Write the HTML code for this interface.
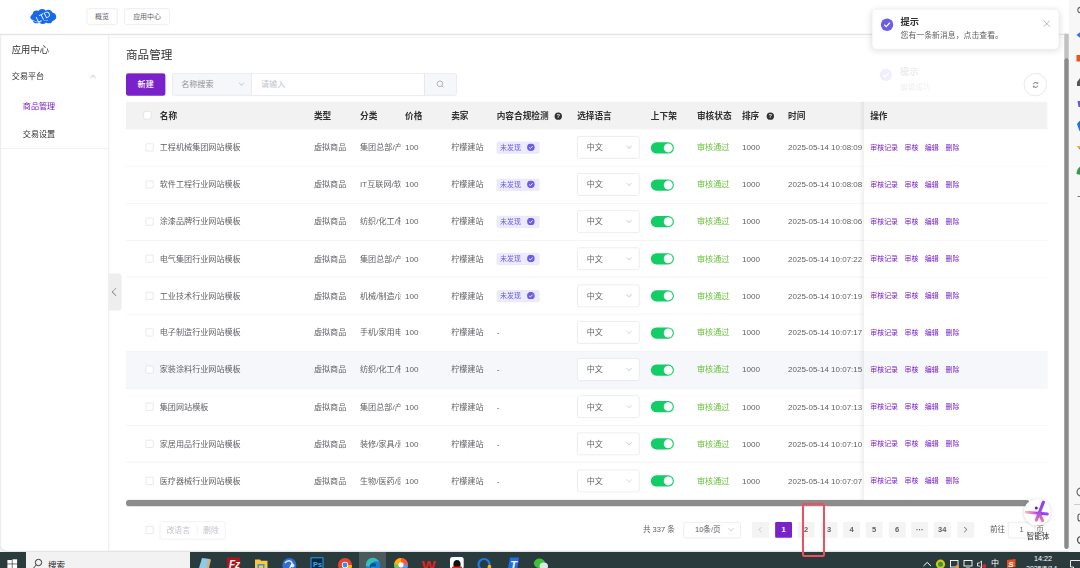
<!DOCTYPE html>
<html lang="zh-CN">
<head>
<meta charset="utf-8">
<title>商品管理</title>
<style>
*{box-sizing:border-box;margin:0;padding:0}
html,body{width:1080px;height:568px;overflow:hidden;background:#f3f3f3;font-family:"Liberation Sans","Noto Sans CJK SC",sans-serif;}
#stage{position:absolute;left:0;top:0;width:1920px;height:1010px;transform:scale(0.5625);transform-origin:0 0;color:#606266;font-size:14.4px;}
#page{position:absolute;left:0;top:0;width:1900.5px;height:979px;background:#fff;border-radius:0 0 0 14px;overflow:hidden;box-shadow:0 0 3px rgba(0,0,0,.25);}
.abs{position:absolute}
/* header */
#hdr{position:absolute;left:0;top:0;width:1902px;height:60px;background:#fff;box-shadow:0 1px 3px rgba(0,0,0,.12);z-index:5}
.tag{position:absolute;top:14.5px;height:29px;border:1px solid #dcdfe6;border-radius:4px;font-size:12.4px;color:#606266;text-align:center;line-height:27px;background:#fff}
/* sidebar */
#side{position:absolute;left:0;top:60px;width:193.5px;height:919px;border-right:1.5px solid #dcdcdc;background:#fff}
#side .t{position:absolute;white-space:nowrap}
/* main */
#ttl{position:absolute;left:224px;top:83px;font-size:20.6px;color:#303133;line-height:28px}
.btn-new{position:absolute;left:224px;top:130px;width:70px;height:40px;background:#7a22c9;border-radius:4px;color:#fff;font-size:14.4px;font-weight:500;text-align:center;line-height:40px}
.sel1{position:absolute;left:306px;top:130px;width:142px;height:40px;border:1px solid #dcdfe6;border-radius:4px 0 0 4px;background:#f5f7fa;color:#909399;line-height:38px;padding-left:15px}
.inp1{position:absolute;left:447px;top:130px;width:308px;height:40px;border:1px solid #dcdfe6;background:#fff;color:#c0c4cc;line-height:38px;padding-left:16px}
.sbtn{position:absolute;left:754px;top:130px;width:58px;height:40px;border:1px solid #dcdfe6;border-radius:0 4px 4px 0;background:#f5f7fa}
/* table */
#thead{position:absolute;left:224px;top:181px;width:1637.5px;height:50px;background:#f2f2f2;color:#303133;font-weight:bold;font-size:15.4px}
#thead span{position:absolute;top:0;line-height:49px;white-space:nowrap}
.row{position:absolute;left:224px;width:1637.5px;height:65.8px;border-bottom:1px solid #e4e7ef;background:#fff}
.row.hov{background:#f5f7fa}
.row span{position:absolute;top:0;line-height:65px;white-space:nowrap}
.cb{position:absolute;width:14px;height:14px;border:1px solid #d4d8e2;border-radius:2px;background:#fff}
.lang{position:absolute;left:802px;top:12px;width:111px;height:40px;border:1px solid #dcdfe6;border-radius:4px;background:#fff}
.lang b{position:absolute;left:16px;top:0;line-height:38px;font-weight:normal;color:#606266}
.sw{position:absolute;left:933px;top:22.5px;width:41px;height:20px;border-radius:10px;background:#13ce66}
.sw i{position:absolute;right:2px;top:2px;width:16px;height:16px;border-radius:8px;background:#fff}
.ok{color:#67c23a}
.op{color:#7a22c9;font-size:12.4px}
.chip{position:absolute;left:659px;top:22px;width:76px;height:21px;border-radius:3px;background:#ecebff;border:1px solid #e1e0fb;color:#6b5ce7;font-size:12.4px;line-height:19px;padding-left:5px}
.chev{position:absolute;width:7px;height:7px;border-right:1.4px solid #c0c4cc;border-bottom:1.4px solid #c0c4cc;transform:rotate(45deg)}
.fixsh{position:absolute;left:1526px;top:181px;width:10px;height:708px;background:linear-gradient(to right,rgba(0,0,0,0),rgba(0,0,0,.06))}
.pg{position:absolute;top:927.5px;width:30px;height:28px;border-radius:2px;background:#f4f4f5;color:#606266;font-size:13.4px;font-weight:bold;text-align:center;line-height:28px}
.pg.on{background:#7a22c9;color:#fff}

.opc{position:absolute;left:1312px;top:0;width:325.5px;height:65px;background:inherit}
.cat{width:72px;overflow:hidden}
.tm{width:134px;overflow:hidden;font-size:14.2px}
.qm{position:absolute;width:13px;height:13px;border-radius:6.5px;background:#303133;color:#f2f2f2;font-size:10.3px;line-height:13px;text-align:center;font-weight:bold}
#notif{position:absolute;left:1549.5px;top:15.5px;width:333px;height:72px;background:#fff;border-radius:8px;box-shadow:0 2px 12px rgba(0,0,0,.12);border:1px solid #ebeef5;z-index:9}
#tb{position:absolute;left:0;top:552px;width:1080px;height:16px;background:#2a3b3d;overflow:hidden;z-index:30}
#rs{position:absolute;left:1069px;top:0;width:11px;height:552px;background:#f7f7f7;overflow:hidden}
</style>
</head>
<body>
<div id="stage">
<div id="page">
  <div id="hdr">
    <svg class="abs" style="left:53px;top:15px" width="48" height="28" viewBox="0 0 48 28">
      <g fill="#1769e8"><ellipse cx="24" cy="15.5" rx="23" ry="9.5"/><circle cx="12" cy="10.5" r="7"/><circle cx="22" cy="8" r="7"/><circle cx="33" cy="10" r="7.5"/><circle cx="40" cy="14" r="6.500"/><circle cx="12" cy="20" r="6.500"/><circle cx="23" cy="21" r="6.500"/><circle cx="34" cy="20" r="6.500"/></g>
      <text x="10" y="19.5" font-size="15" fill="#fff" font-family="Liberation Sans, sans-serif" transform="rotate(-27 24 14)" textLength="27" lengthAdjust="spacingAndGlyphs">LTD</text>
      <text x="24" y="21.500" font-size="4" fill="#fff" font-family="Liberation Sans, sans-serif">.com</text>
      <path d="M5 20c3 4 10 5 16 3.500" fill="none" stroke="#fff" stroke-width="0.900"/>
    </svg>
    <div class="tag" style="left:153.5px;width:55.5px">概览</div>
    <div class="tag" style="left:221px;width:81px">应用中心</div>
  </div>
  <div class="abs" style="left:0;top:60px;width:1.5px;height:919px;background:#ececec;z-index:4"></div>
  <div id="side">
    <div class="t" style="left:21px;top:17px;font-size:16.5px;color:#303133;line-height:22px">应用中心</div>
    <div class="t" style="left:21px;top:65px;font-size:14.4px;color:#303133;line-height:20px">交易平台</div>
    <div class="chev" style="left:162px;top:75px;transform:rotate(-135deg);border-color:#b0b3b9"></div>
    <div class="t" style="left:40.5px;top:119px;font-size:14.4px;color:#7a22c9;line-height:20px">商品管理</div>
    <div class="t" style="left:40.5px;top:169px;font-size:14.4px;color:#303133;line-height:20px">交易设置</div>
    <div class="abs" style="left:0;top:204px;width:192px;height:1px;background:#e6e6e6"></div>
  </div>
  <div class="abs" style="left:193px;top:486px;width:22.500px;height:66px;background:#eeeeee;border-radius:0 6px 6px 0"></div>
  <div class="chev" style="left:201px;top:514px;width:10px;height:10px;border-width:1.800px;transform:rotate(135deg);border-color:#606266"></div>

  <div class="abs" style="left:0;top:59.5px;width:1900px;height:3px;background:linear-gradient(#f2f2f2,#e2e2e2 50%,#f4f4f4);z-index:6"></div>
  <div class="abs" style="left:194px;top:66px;width:1697px;height:1px;background:#f0f0f0"></div>
  <div id="ttl">商品管理</div>
  <div class="btn-new">新建</div>
  <div class="sel1">名称搜索<div class="chev" style="left:119px;top:13px"></div></div>
  <div class="inp1">请输入</div>
  <div class="sbtn"><svg class="abs" style="left:20px;top:11px" width="16" height="16" viewBox="0 0 16 16"><circle cx="7" cy="7" r="5" fill="none" stroke="#909399" stroke-width="1.2"/><path d="M11 11l2.5 2.5" stroke="#909399" stroke-width="1.2"/></svg></div>

  <div id="thead">
    <div class="cb" style="left:31px;top:17px"></div>
    <span style="left:60px">名称</span>
    <span style="left:334px">类型</span>
    <span style="left:416px">分类</span>
    <span style="left:496px">价格</span>
    <span style="left:578px">卖家</span>
    <span style="left:659px">内容合规检测</span>
    <div class="qm" style="left:762px;top:19px">?</div>
    <span style="left:802px">选择语言</span>
    <span style="left:933px">上下架</span>
    <span style="left:1015px">审核状态</span>
    <span style="left:1095px">排序</span>
    <div class="qm" style="left:1139px;top:19px">?</div>
    <span style="left:1177px">时间</span>
    <span style="left:1323px">操作</span>
  </div>
    <div class="row" style="top:230.3px">
    <div class="cb" style="left:35px;top:25px"></div>
    <span style="left:60px">工程机械集团网站模板</span>
    <span style="left:334px">虚拟商品</span>
    <span class="cat" style="left:416px">集团总部/产</span>
    <span style="left:496px">100</span>
    <span style="left:578px">柠檬建站</span>
    <div class="chip">未发现<svg class="abs" style="left:53px;top:2px" width="13.5" height="13.5" viewBox="0 0 12 12"><circle cx="6" cy="6" r="6" fill="#6b5ce7"/><path d="M3.2 6.2l2 1.9 3.6-3.8" fill="none" stroke="#fff" stroke-width="1.4"/></svg></div>
    <div class="lang"><b>中文</b><div class="chev" style="left:88px;top:13px"></div></div>
    <div class="sw"><i></i></div>
    <span class="ok" style="left:1015px">审核通过</span>
    <span style="left:1095px">1000</span>
    <span class="tm" style="left:1177px">2025-05-14 10:08:09</span>
    <div class="opc"><span class="op" style="left:11px">审核记录</span><span class="op" style="left:72px">审核</span><span class="op" style="left:108px">编辑</span><span class="op" style="left:145px">删除</span></div>
  </div>
  <div class="row" style="top:296.1px">
    <div class="cb" style="left:35px;top:25px"></div>
    <span style="left:60px">软件工程行业网站模板</span>
    <span style="left:334px">虚拟商品</span>
    <span class="cat" style="left:416px">IT互联网/软</span>
    <span style="left:496px">100</span>
    <span style="left:578px">柠檬建站</span>
    <div class="chip">未发现<svg class="abs" style="left:53px;top:2px" width="13.5" height="13.5" viewBox="0 0 12 12"><circle cx="6" cy="6" r="6" fill="#6b5ce7"/><path d="M3.2 6.2l2 1.9 3.6-3.8" fill="none" stroke="#fff" stroke-width="1.4"/></svg></div>
    <div class="lang"><b>中文</b><div class="chev" style="left:88px;top:13px"></div></div>
    <div class="sw"><i></i></div>
    <span class="ok" style="left:1015px">审核通过</span>
    <span style="left:1095px">1000</span>
    <span class="tm" style="left:1177px">2025-05-14 10:08:08</span>
    <div class="opc"><span class="op" style="left:11px">审核记录</span><span class="op" style="left:72px">审核</span><span class="op" style="left:108px">编辑</span><span class="op" style="left:145px">删除</span></div>
  </div>
  <div class="row" style="top:361.9px">
    <div class="cb" style="left:35px;top:25px"></div>
    <span style="left:60px">涂漆品牌行业网站模板</span>
    <span style="left:334px">虚拟商品</span>
    <span class="cat" style="left:416px">纺织/化工/制</span>
    <span style="left:496px">100</span>
    <span style="left:578px">柠檬建站</span>
    <div class="chip">未发现<svg class="abs" style="left:53px;top:2px" width="13.5" height="13.5" viewBox="0 0 12 12"><circle cx="6" cy="6" r="6" fill="#6b5ce7"/><path d="M3.2 6.2l2 1.9 3.6-3.8" fill="none" stroke="#fff" stroke-width="1.4"/></svg></div>
    <div class="lang"><b>中文</b><div class="chev" style="left:88px;top:13px"></div></div>
    <div class="sw"><i></i></div>
    <span class="ok" style="left:1015px">审核通过</span>
    <span style="left:1095px">1000</span>
    <span class="tm" style="left:1177px">2025-05-14 10:08:06</span>
    <div class="opc"><span class="op" style="left:11px">审核记录</span><span class="op" style="left:72px">审核</span><span class="op" style="left:108px">编辑</span><span class="op" style="left:145px">删除</span></div>
  </div>
  <div class="row" style="top:427.7px">
    <div class="cb" style="left:35px;top:25px"></div>
    <span style="left:60px">电气集团行业网站模板</span>
    <span style="left:334px">虚拟商品</span>
    <span class="cat" style="left:416px">集团总部/产</span>
    <span style="left:496px">100</span>
    <span style="left:578px">柠檬建站</span>
    <div class="chip">未发现<svg class="abs" style="left:53px;top:2px" width="13.5" height="13.5" viewBox="0 0 12 12"><circle cx="6" cy="6" r="6" fill="#6b5ce7"/><path d="M3.2 6.2l2 1.9 3.6-3.8" fill="none" stroke="#fff" stroke-width="1.4"/></svg></div>
    <div class="lang"><b>中文</b><div class="chev" style="left:88px;top:13px"></div></div>
    <div class="sw"><i></i></div>
    <span class="ok" style="left:1015px">审核通过</span>
    <span style="left:1095px">1000</span>
    <span class="tm" style="left:1177px">2025-05-14 10:07:22</span>
    <div class="opc"><span class="op" style="left:11px">审核记录</span><span class="op" style="left:72px">审核</span><span class="op" style="left:108px">编辑</span><span class="op" style="left:145px">删除</span></div>
  </div>
  <div class="row" style="top:493.5px">
    <div class="cb" style="left:35px;top:25px"></div>
    <span style="left:60px">工业技术行业网站模板</span>
    <span style="left:334px">虚拟商品</span>
    <span class="cat" style="left:416px">机械/制造/设</span>
    <span style="left:496px">100</span>
    <span style="left:578px">柠檬建站</span>
    <div class="chip">未发现<svg class="abs" style="left:53px;top:2px" width="13.5" height="13.5" viewBox="0 0 12 12"><circle cx="6" cy="6" r="6" fill="#6b5ce7"/><path d="M3.2 6.2l2 1.9 3.6-3.8" fill="none" stroke="#fff" stroke-width="1.4"/></svg></div>
    <div class="lang"><b>中文</b><div class="chev" style="left:88px;top:13px"></div></div>
    <div class="sw"><i></i></div>
    <span class="ok" style="left:1015px">审核通过</span>
    <span style="left:1095px">1000</span>
    <span class="tm" style="left:1177px">2025-05-14 10:07:19</span>
    <div class="opc"><span class="op" style="left:11px">审核记录</span><span class="op" style="left:72px">审核</span><span class="op" style="left:108px">编辑</span><span class="op" style="left:145px">删除</span></div>
  </div>
  <div class="row" style="top:559.3px">
    <div class="cb" style="left:35px;top:25px"></div>
    <span style="left:60px">电子制造行业网站模板</span>
    <span style="left:334px">虚拟商品</span>
    <span class="cat" style="left:416px">手机/家用电</span>
    <span style="left:496px">100</span>
    <span style="left:578px">柠檬建站</span>
    <span style="left:659px">-</span>
    <div class="lang"><b>中文</b><div class="chev" style="left:88px;top:13px"></div></div>
    <div class="sw"><i></i></div>
    <span class="ok" style="left:1015px">审核通过</span>
    <span style="left:1095px">1000</span>
    <span class="tm" style="left:1177px">2025-05-14 10:07:17</span>
    <div class="opc"><span class="op" style="left:11px">审核记录</span><span class="op" style="left:72px">审核</span><span class="op" style="left:108px">编辑</span><span class="op" style="left:145px">删除</span></div>
  </div>
  <div class="row hov" style="top:625.0999999999999px">
    <div class="cb" style="left:35px;top:25px"></div>
    <span style="left:60px">家装涂料行业网站模板</span>
    <span style="left:334px">虚拟商品</span>
    <span class="cat" style="left:416px">纺织/化工/制</span>
    <span style="left:496px">100</span>
    <span style="left:578px">柠檬建站</span>
    <span style="left:659px">-</span>
    <div class="lang"><b>中文</b><div class="chev" style="left:88px;top:13px"></div></div>
    <div class="sw"><i></i></div>
    <span class="ok" style="left:1015px">审核通过</span>
    <span style="left:1095px">1000</span>
    <span class="tm" style="left:1177px">2025-05-14 10:07:15</span>
    <div class="opc"><span class="op" style="left:11px">审核记录</span><span class="op" style="left:72px">审核</span><span class="op" style="left:108px">编辑</span><span class="op" style="left:145px">删除</span></div>
  </div>
  <div class="row" style="top:690.9px">
    <div class="cb" style="left:35px;top:25px"></div>
    <span style="left:60px">集团网站模板</span>
    <span style="left:334px">虚拟商品</span>
    <span class="cat" style="left:416px">集团总部/产</span>
    <span style="left:496px">100</span>
    <span style="left:578px">柠檬建站</span>
    <span style="left:659px">-</span>
    <div class="lang"><b>中文</b><div class="chev" style="left:88px;top:13px"></div></div>
    <div class="sw"><i></i></div>
    <span class="ok" style="left:1015px">审核通过</span>
    <span style="left:1095px">1000</span>
    <span class="tm" style="left:1177px">2025-05-14 10:07:13</span>
    <div class="opc"><span class="op" style="left:11px">审核记录</span><span class="op" style="left:72px">审核</span><span class="op" style="left:108px">编辑</span><span class="op" style="left:145px">删除</span></div>
  </div>
  <div class="row" style="top:756.7px">
    <div class="cb" style="left:35px;top:25px"></div>
    <span style="left:60px">家居用品行业网站模板</span>
    <span style="left:334px">虚拟商品</span>
    <span class="cat" style="left:416px">装修/家具/建</span>
    <span style="left:496px">100</span>
    <span style="left:578px">柠檬建站</span>
    <span style="left:659px">-</span>
    <div class="lang"><b>中文</b><div class="chev" style="left:88px;top:13px"></div></div>
    <div class="sw"><i></i></div>
    <span class="ok" style="left:1015px">审核通过</span>
    <span style="left:1095px">1000</span>
    <span class="tm" style="left:1177px">2025-05-14 10:07:10</span>
    <div class="opc"><span class="op" style="left:11px">审核记录</span><span class="op" style="left:72px">审核</span><span class="op" style="left:108px">编辑</span><span class="op" style="left:145px">删除</span></div>
  </div>
  <div class="row" style="top:822.5px">
    <div class="cb" style="left:35px;top:25px"></div>
    <span style="left:60px">医疗器械行业网站模板</span>
    <span style="left:334px">虚拟商品</span>
    <span class="cat" style="left:416px">生物/医药/医</span>
    <span style="left:496px">100</span>
    <span style="left:578px">柠檬建站</span>
    <span style="left:659px">-</span>
    <div class="lang"><b>中文</b><div class="chev" style="left:88px;top:13px"></div></div>
    <div class="sw"><i></i></div>
    <span class="ok" style="left:1015px">审核通过</span>
    <span style="left:1095px">1000</span>
    <span class="tm" style="left:1177px">2025-05-14 10:07:07</span>
    <div class="opc"><span class="op" style="left:11px">审核记录</span><span class="op" style="left:72px">审核</span><span class="op" style="left:108px">编辑</span><span class="op" style="left:145px">删除</span></div>
  </div>
  <div class="fixsh"></div>
  <div class="abs" style="left:224px;top:889px;width:1606px;height:10.5px;border-radius:5px;background:#8c8c8c"></div>
  <!-- footer -->
  <div class="cb" style="left:259px;top:934.5px"></div>
  <div class="abs" style="left:284px;top:926.5px;width:117px;height:32px;border:1px solid #e4e7ed;border-radius:3px;background:#fff;color:#c0c4cc;font-size:14px;line-height:30px;white-space:nowrap"><span class="abs" style="left:11px">改语言</span><span class="abs" style="left:65px;top:7px;width:1px;height:16px;background:#e4e7ed"></span><span class="abs" style="left:76px">删除</span></div>
  <div class="abs" style="left:1143px;top:927px;font-size:13.4px;line-height:30px;color:#606266;white-space:nowrap">共 337 条</div>
  <div class="abs" style="left:1214.5px;top:928px;width:102px;height:28.5px;border:1px solid #dcdfe6;border-radius:3px;font-size:13.4px;line-height:26.5px;color:#606266;padding-left:20px;background:#fff">10条/页<div class="chev" style="left:80px;top:7px"></div></div>
  <div class="pg" style="left:1337px"><div class="chev" style="left:13px;top:10px;transform:rotate(135deg)"></div></div>
  <div class="pg on" style="left:1378px">1</div>
  <div class="pg" style="left:1418px">2</div>
  <div class="pg" style="left:1459px">3</div>
  <div class="pg" style="left:1499px">4</div>
  <div class="pg" style="left:1539px">5</div>
  <div class="pg" style="left:1580px">6</div>
  <div class="pg" style="left:1620px">···</div>
  <div class="pg" style="left:1660px">34</div>
  <div class="pg" style="left:1702px"><div class="chev" style="left:9px;top:10px;transform:rotate(-45deg);border-color:#606266"></div></div>
  <div class="abs" style="left:1760px;top:927px;font-size:13.4px;line-height:30px;color:#606266;white-space:nowrap">前往</div>
  <div class="abs" style="left:1792px;top:928px;width:48px;height:28.5px;border:1px solid #dcdfe6;border-radius:3px;font-size:13.4px;line-height:26px;color:#606266;text-align:center;background:#fff">1</div>
  <div class="abs" style="left:1842px;top:927px;font-size:13.4px;line-height:30px;color:#606266">页</div>
  <!-- refresh -->
  <div class="abs" style="left:1820px;top:130px;width:41px;height:41px;border:1px solid #d3d6dd;border-radius:21px;background:#fff;z-index:9"><svg class="abs" style="left:13.500px;top:13.500px" width="12" height="12" viewBox="0 0 15 15"><path d="M2.5 6a5 5 0 0 1 9-2M12.5 9a5 5 0 0 1-9 2" fill="none" stroke="#5a5d63" stroke-width="1.600"/><path d="M12.5 1.5v3h-3M2.5 13.5v-3h3" fill="none" stroke="#5a5d63" stroke-width="1.600"/></svg></div>
  <!-- ghost notification -->
  <div class="abs" style="left:1548px;top:106px;width:334px;height:71px;background:rgba(255,255,255,.6);border-radius:8px;z-index:8"><div class="abs" style="left:16px;top:16px;width:22px;height:22px;border-radius:11px;background:#f1effd"><svg class="abs" style="left:4px;top:5px" width="14" height="12" viewBox="0 0 14 12"><path d="M2 6l3.5 3.5L12 2.500" fill="none" stroke="#fff" stroke-width="2.200"/></svg></div><div class="abs" style="left:52px;top:10px;font-size:16.500px;font-weight:bold;color:#ededf0;line-height:24px">提示</div><div class="abs" style="left:52px;top:40px;font-size:13.400px;color:#f0f0f2;line-height:20px">编辑成功</div></div>
  <!-- notification -->
  <div id="notif">
    <div class="abs" style="left:15px;top:16px;width:22px;height:22px;border-radius:11px;background:#6c5ce7"><svg class="abs" style="left:4px;top:5px" width="14" height="12" viewBox="0 0 14 12"><path d="M2 6l3.5 3.5L12 2.5" fill="none" stroke="#fff" stroke-width="2.2"/></svg></div>
    <div class="abs" style="left:50.500px;top:9px;font-size:16.500px;font-weight:bold;color:#303133;line-height:24px">提示</div>
    <div class="abs" style="left:50.500px;top:36px;font-size:14px;color:#606266;line-height:20px;white-space:nowrap">您有一条新消息，点击查看。</div>
    <svg class="abs" style="left:303px;top:18px" width="14" height="14" viewBox="0 0 14 14"><path d="M1.5 1.5l11 11M12.5 1.5l-11 11" stroke="#909399" stroke-width="1.2"/></svg>
  </div>
  <!-- page vscroll -->
  <div class="abs" style="left:1891.5px;top:60px;width:8.5px;height:44px;background:#c1c1c1;z-index:10"></div>
  <div class="abs" style="left:1891.5px;top:103px;width:8.5px;height:873px;background:#8a8a8a;z-index:10;border-radius:4px"></div>
  <!-- agent float -->
  <div class="abs" style="left:1820.2px;top:886.5px;width:47.5px;height:47.5px;border-radius:24px;background:#fff;box-shadow:0 1px 6px rgba(0,0,0,.18);z-index:11"><svg class="abs" style="left:0;top:0" width="47.5" height="47.5" viewBox="0 0 47.5 47.5"><defs><linearGradient id="g1" gradientUnits="userSpaceOnUse" x1="0" y1="4" x2="0" y2="42"><stop offset="0" stop-color="#8a3cf0"/><stop offset="0.5" stop-color="#a04be8"/><stop offset="1" stop-color="#ff7aa8"/></linearGradient><linearGradient id="g2" gradientUnits="userSpaceOnUse" x1="2" y1="0" x2="44" y2="0"><stop offset="0" stop-color="#ffc2a6"/><stop offset="0.35" stop-color="#d86be0"/><stop offset="0.6" stop-color="#8a3cf0"/><stop offset="1" stop-color="#9a4bf0"/></linearGradient></defs><g stroke-linecap="round" fill="none"><path d="M4.500 23.400L42 26.800" stroke="url(#g2)" stroke-width="5.2"/><path d="M34.800 6L27.200 25.700L22.500 37.500" stroke="url(#g1)" stroke-width="5.6"/><path d="M27.200 25.700L33.500 38.500" stroke="url(#g1)" stroke-width="5.6"/></g><circle cx="22.300" cy="16" r="2.700" fill="#5b1fd6"/></svg></div>
  <div class="abs" style="left:1825px;top:944.5px;font-size:13.600px;color:#303133;line-height:20px;z-index:11;white-space:nowrap">智能体</div>

</div>
</div>

<div id="rs">
  <svg class="abs" style="left:-0.4px;top:0" width="12" height="552" viewBox="0 0 12 552">
    <circle cx="11.500" cy="10" r="2.700" fill="none" stroke="#666" stroke-width="1.100"/>
    <path d="M7.5 35l4.5-3.5v7z" fill="#3b6ef5"/>
    <rect x="7.5" y="55" width="5" height="6.5" fill="#e8541c"/>
    <path d="M8 86v-4l2-2.5 2-3v9.5z" fill="#555"/>
    <path d="M8.5 101h4v6h-3z" fill="#6a5acd"/>
    <path d="M8 124l2.5-3h2v10h-2z" fill="#1a73e8"/>
    <path d="M7.5 146h5v5z" fill="#f5a623"/><path d="M10 148h2.5v4z" fill="#3b6ef5"/>
    <path d="M7.5 174c0-4 2-7 5-8v9z" fill="#2ea043"/>
    <rect x="8.5" y="196" width="4" height="1" fill="#777"/>
    <circle cx="12" cy="492" r="4" fill="none" stroke="#666" stroke-width="1.1"/>
    <rect x="5" y="504" width="8" height="1" fill="#ccc"/>
    <rect x="9" y="514" width="6" height="7" rx="2" fill="none" stroke="#555" stroke-width="1.1"/>
    <circle cx="12" cy="540" r="3.5" fill="none" stroke="#555" stroke-width="1.3"/>
  </svg>
</div>
<div class="abs" style="left:801.7px;top:503.3px;width:23px;height:53.5px;border:2px solid #f0505e;border-radius:2px;z-index:40"></div>
<div id="tb">
  <div class="abs" style="left:26px;top:0;width:164px;height:16px;background:#f2f2f2"></div>
  <div class="abs" style="left:359px;top:0;width:27px;height:16px;background:#4b5b5d"></div>
  <div class="abs" style="left:48px;top:7px;font-size:8.5px;line-height:12px;color:#222;white-space:nowrap">搜索</div>
  <div class="abs" style="left:1034px;top:2px;font-size:7.2px;line-height:10px;color:#fff;white-space:nowrap">14:22</div>
  <div class="abs" style="left:1026px;top:11.5px;font-size:7px;line-height:10px;color:#fff;white-space:nowrap">2025/5/14</div>
  <div class="abs" style="left:991px;top:6px;font-size:8px;line-height:11px;color:#fff;white-space:nowrap">中</div>
  <svg class="abs" style="left:0;top:0" width="1080" height="16" viewBox="0 552 1080 16">
    <!-- windows -->
    <g fill="#fff"><rect x="7.4" y="560" width="4.4" height="3.6"/><rect x="12.5" y="559.3" width="4.6" height="4.3"/><rect x="7.4" y="564.3" width="4.4" height="4"/><rect x="12.5" y="564.3" width="4.6" height="4"/></g>
    <!-- magnifier -->
    <circle cx="38.5" cy="562.5" r="3.2" fill="none" stroke="#222" stroke-width="0.9"/><path d="M36.2 565l-3 3.5" stroke="#222" stroke-width="0.9"/>
    <!-- notepad -->
    <path d="M202 558l8 1-3 9h-8z" fill="#8ecbe8"/><path d="M208 559l3 0.5-2 8.5h-3z" fill="#c9b48a"/>
    <!-- filezilla -->
    <rect x="227" y="557.5" width="13" height="11" fill="#b3121a"/><text x="229" y="568" font-size="10" font-weight="bold" font-style="italic" fill="#fff" font-family="Liberation Sans, sans-serif">Fz</text>
    <!-- folder -->
    <path d="M255 559.5h5l1 1.3h6.5v8h-12.5z" fill="#f7c948"/><rect x="257.5" y="564" width="7" height="5" fill="#4a90d9"/><rect x="259" y="565.5" width="4" height="3" fill="#f7c948"/>
    <!-- globe -->
    <circle cx="289.3" cy="565" r="7" fill="#2f6fd1"/><path d="M285 563c2-3 6-3 7 0s-3 3-2 6" stroke="#dfe9fb" stroke-width="1.4" fill="none"/><circle cx="292.5" cy="565.5" r="2" fill="#fff" opacity=".8"/>
    <!-- ps -->
    <rect x="311" y="557.8" width="12" height="11" fill="#0a2a42" stroke="#31a8ff" stroke-width="0.9"/><text x="313" y="567" font-size="7.500" font-weight="bold" fill="#31a8ff" font-family="Liberation Sans, sans-serif">Ps</text>
    <!-- chrome -->
    <circle cx="345" cy="565" r="7" fill="#ea4335"/><path d="M345 565l-6.2 3.3a7 7 0 0 0 3 3h3.2z" fill="#34a853"/><path d="M345 565h7a7 7 0 0 1-3.5 6.2z" fill="#fbbc05"/><circle cx="345" cy="565" r="3.2" fill="#fff"/><circle cx="345" cy="565" r="2.4" fill="#4285f4"/>
    <!-- edge -->
    <circle cx="373" cy="565.5" r="7.2" fill="#1b7fd6"/><path d="M366 566a7 7 0 0 1 13.5-3.5c-2-2-7-2-8 2s3 5 6 4" fill="#35c1b1"/><path d="M370 568c-1-3 1-5 3.5-5s3 2 2 3.500h-4z" fill="#0b4f9c"/>
    <!-- pinwheel -->
    <circle cx="401" cy="564.8" r="6.9" fill="#ff4fa3"/><path d="M401 564.800l-6.900 0a6.900 6.900 0 0 1 6.900-6.900z" fill="#ffb300"/><path d="M401 564.800v-6.900a6.900 6.900 0 0 1 6.900 6.900z" fill="#ff5a36"/><path d="M401 564.800h6.900a6.900 6.900 0 0 1-3 5.700z" fill="#35a7ff"/><path d="M401 564.800l-6.900 0a6.900 6.900 0 0 0 3 5.700z" fill="#4bd663"/><circle cx="401" cy="564.800" r="2.600" fill="#fff"/>
    <!-- wps -->
    <text x="421.500" y="569.500" font-size="13" font-weight="bold" fill="#e0231c" font-family="Liberation Sans, sans-serif" textLength="14" lengthAdjust="spacingAndGlyphs">W</text>
    <!-- qq -->
    <rect x="450" y="557" width="13.700" height="12" rx="2.500" fill="#fff"/><ellipse cx="457" cy="564.500" rx="3.600" ry="4.500" fill="#111"/><path d="M452.500 566.500h9l1 2h-11z" fill="#e0231c"/>
    <!-- blue q -->
    <circle cx="484" cy="564.500" r="5.500" fill="none" stroke="#1e78e6" stroke-width="2.200"/><circle cx="489.500" cy="566.500" r="1.800" fill="#f5b400"/>
    <!-- T -->
    <path d="M510 557.500h9l-1.500 11h-9.500z" fill="#1e6fe0"/><text x="510.300" y="569" font-size="11" font-weight="bold" font-style="italic" fill="#fff" font-family="Liberation Sans, sans-serif">T</text>
    <!-- wechat -->
    <ellipse cx="539.500" cy="563.300" rx="5.600" ry="4.800" fill="#3cc13b"/><ellipse cx="543.800" cy="566.200" rx="4.200" ry="3.600" fill="#dfe6e6"/>
    <!-- tray -->
    <path d="M923.500 566l3.700-3.600 3.700 3.600" stroke="#fff" stroke-width="1" fill="none"/>
    <circle cx="940.500" cy="564.200" r="4.600" fill="#d8c41a"/><circle cx="940.500" cy="564.200" r="2.500" fill="#2e9d3a"/>
    <rect x="950.500" y="560.500" width="7.500" height="6.500" fill="none" stroke="#fff" stroke-width="0.900"/><circle cx="957.200" cy="566.800" r="1.700" fill="#f39a1e"/>
    <rect x="964" y="560.500" width="8" height="5.500" fill="none" stroke="#fff" stroke-width="0.900"/><path d="M966 568h4" stroke="#fff" stroke-width="0.900"/>
    <path d="M977.500 563h1.800l2.200-2v7l-2.200-2h-1.800z" fill="none" stroke="#fff" stroke-width="0.800"/><circle cx="984.300" cy="566" r="2" fill="#e0232e"/>
    <path d="M1007 560l8.500-1v8l-8.500 1z" fill="#f04b1a"/><text x="1008.300" y="566.800" font-size="8" font-weight="bold" font-style="italic" fill="#fff" font-family="Liberation Sans, sans-serif">S</text>
    <path d="M1070.500 560.500h9.500M1070.500 560.500v6.500h3v2" stroke="#fff" stroke-width="0.900" fill="none"/>
  </svg>
</div>
</body>
</html>
